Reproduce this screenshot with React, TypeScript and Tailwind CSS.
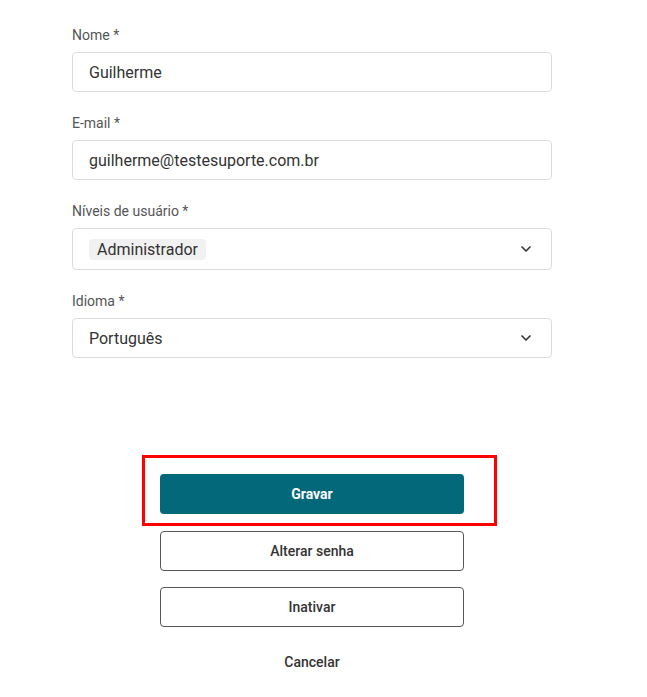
import { ChevronDown } from 'lucide-react'

function Field({ label, children }: { label: string; children: React.ReactNode }) {
  return (
    <div className="flex flex-col">
      <label className="mb-[7px] text-[14px] leading-5 text-[#555]">{label}</label>
      {children}
    </div>
  )
}

export default function App() {
  return (
    <div className="min-h-[697px] bg-white font-['Roboto',sans-serif]">
      <div className="ml-[72px] flex w-[480px] flex-col gap-[21px] pt-[25px]">
        <Field label="Nome *">
          <div className="flex h-10 items-center rounded border border-[#dcdcdc] px-4 pt-[2px] text-[16px] text-[#333]">
            Guilherme
          </div>
        </Field>
        <Field label="E-mail *">
          <div className="flex h-10 items-center rounded border border-[#dcdcdc] px-4 pt-[2px] text-[16px] text-[#333]">
            guilherme@testesuporte.com.br
          </div>
        </Field>
        <Field label="Níveis de usuário *">
          <div className="flex h-[42px] items-center justify-between rounded border border-[#dcdcdc] pl-4 pr-[17px] text-[16px] text-[#333]">
            <span className="rounded-sm bg-[#f1f1f1] px-2 leading-[21px]">Administrador</span>
            <ChevronDown size={16} strokeWidth={2.5} className="text-[#333]" />
          </div>
        </Field>
        <Field label="Idioma *">
          <div className="flex h-10 items-center justify-between rounded border border-[#dcdcdc] pl-4 pr-[17px] text-[16px] text-[#333]">
            <span className="pt-[1px]">Português</span>
            <ChevronDown size={16} strokeWidth={2.5} className="text-[#333]" />
          </div>
        </Field>
      </div>

      <div className="ml-[160px] mt-[116px] flex w-[304px] flex-col text-[14px]">
        <div className="relative">
          <span className="pointer-events-none absolute -left-[18px] -top-[19px] h-[71px] w-[355px] border-[3px] border-[#ff0000]" />
          <button className="h-10 w-full rounded bg-[#02687a] font-bold text-white">Gravar</button>
        </div>
        <button className="mt-[17px] h-10 w-full rounded border border-[#555] font-medium text-[#333]">
          Alterar senha
        </button>
        <button className="mt-4 h-10 w-full rounded border border-[#555] font-medium text-[#333]">
          Inativar
        </button>
        <button className="mt-[15px] h-10 w-full font-medium text-[#333]">Cancelar</button>
      </div>
    </div>
  )
}
